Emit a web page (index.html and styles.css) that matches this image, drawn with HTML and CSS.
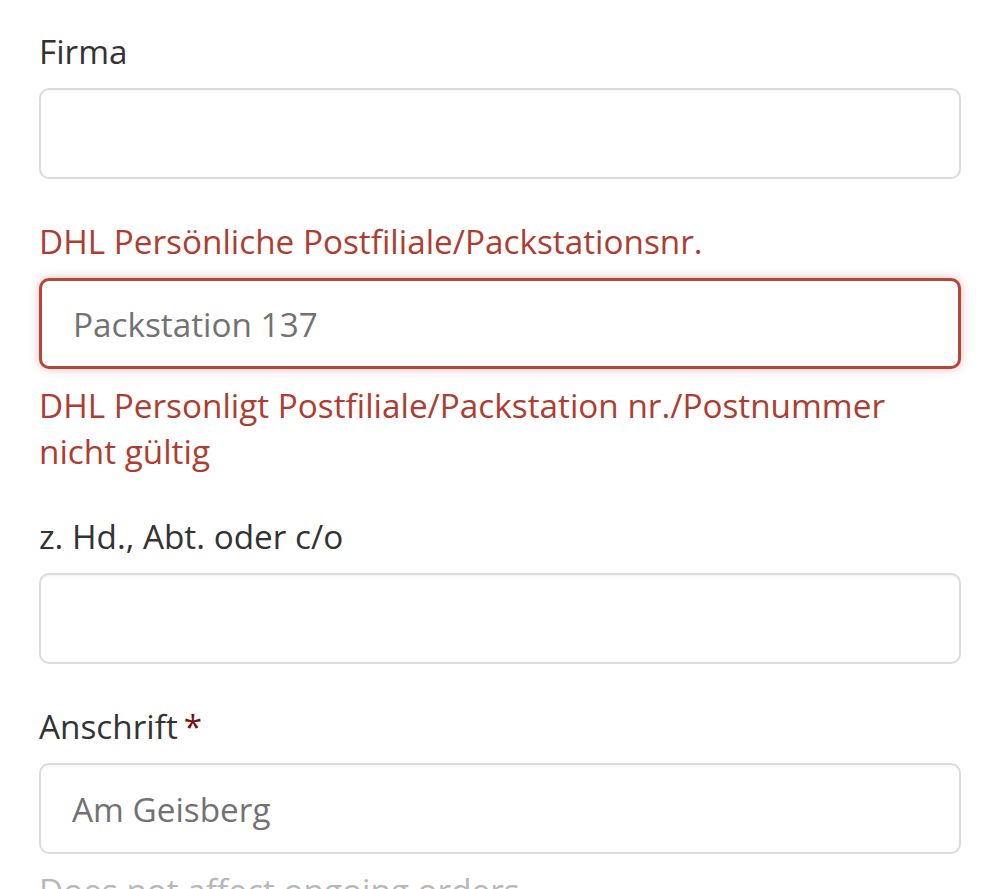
FILE: index.html
```html
<!DOCTYPE html>
<html lang="de">
<head>
<meta charset="utf-8">
<link rel="stylesheet" href="styles.css">
</head>
<body>
<form class="form">
  <div class="group">
    <label class="label" for="firma">Firma</label>
    <input class="input" id="firma" type="text">
  </div>
  <div class="group has-error">
    <label class="label" for="dhl">DHL Persönliche Postfiliale/Packstationsnr.</label>
    <input class="input" id="dhl" type="text" value="Packstation 137">
    <div class="error">DHL Personligt Postfiliale/Packstation nr./Postnummer nicht gültig</div>
  </div>
  <div class="group">
    <label class="label" for="co">z. Hd., Abt. oder c/o</label>
    <input class="input" id="co" type="text">
  </div>
  <div class="group">
    <label class="label" for="addr">Anschrift<span class="req">*</span></label>
    <input class="input" id="addr" type="text" value="Am Geisberg">
    <div class="help">Does not affect ongoing orders</div>
  </div>
</form>
</body>
</html>
```
FILE: styles.css
```css
html, body {
  margin: 0;
  padding: 0;
  background: #fff;
}
body {
  font-family: "Open Sans", "Noto Sans", sans-serif;
  font-size: 33.3px;
  line-height: 46px;
  color: #333;
}
.form {
  display: flex;
  flex-direction: column;
  gap: 39px;
  padding: 28px 39px 40px;
}
.group {
  display: flex;
  flex-direction: column;
}
.label {
  display: block;
  font-weight: 400;
  margin-bottom: 14px;
}
.input {
  box-sizing: border-box;
  height: 91px;
  width: 100%;
  border: 2px solid #dcdcdc;
  border-radius: 10px;
  padding: 0 31px;
  font-family: inherit;
  font-size: 33.3px;
  color: #727272;
  background: #fff;
  box-shadow: inset 0 2px 2px rgba(0,0,0,0.03);
  outline: none;
}
.has-error .label,
.error {
  color: #ad3d31;
}
.has-error .input {
  border: 3px solid #b6463b;
  box-shadow: 0 0 10px rgba(206, 132, 131, 0.55);
}
.error {
  margin-top: 13px;
}
.help {
  margin-top: 13px;
  color: #b8b8b8;
}
.req {
  color: #7a1010;
  margin-left: 6px;
}
```
